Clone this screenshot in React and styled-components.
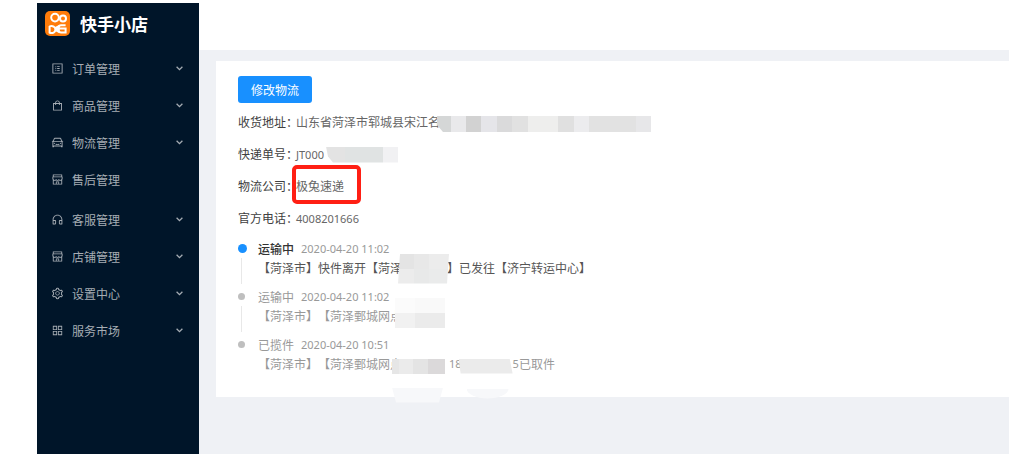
import React from 'react';
import styled, { createGlobalStyle } from 'styled-components';
import {
  AiOutlineProfile,
  AiOutlineShopping,
  AiOutlineCar,
  AiOutlineShop,
  AiOutlineCustomerService,
  AiOutlineSetting,
  AiOutlineAppstore,
} from 'react-icons/ai';

const GlobalStyle = createGlobalStyle`
  * {
    box-sizing: border-box;
  }

  body {
    margin: 0;
    background: #fff;
    color: #666;
    font-family: "Noto Sans CJK SC", sans-serif;
    font-size: 12px;
    text-spacing-trim: space-all;
  }
`;

const Page = styled.div`
  display: flex;
  min-height: 100vh;
  padding: 3px 0 0 37px;
`;

const Sidebar = styled.aside`
  flex: 0 0 162px;
  background: #001529;
`;

const Brand = styled.div`
  display: flex;
  align-items: center;
  gap: 10px;
  height: 40px;
  padding-left: 8px;
  color: #fff;
  font-size: 17px;
  font-weight: 700;
`;

const Menu = styled.ul`
  margin: 0;
  padding: 7px 0 0;
  list-style: none;
`;

const MenuItem = styled.li`
  margin-bottom: ${(props) => (props.$leaf ? '3px' : '0')};
`;

const MenuButton = styled.button`
  display: flex;
  align-items: center;
  width: 100%;
  height: 37px;
  padding: 0 16px 0 14px;
  border: 0;
  background: none;
  color: #a6adb4;
  font: inherit;
  line-height: 18px;
  cursor: pointer;

  svg {
    flex: none;
  }

  span {
    flex: 1;
    margin-left: 8px;
    text-align: left;
  }
`;

const Main = styled.main`
  display: flex;
  flex: 1;
  flex-direction: column;
  min-width: 0;
`;

const Header = styled.header`
  height: 47px;
  background: #fff;
`;

const Content = styled.div`
  flex: 1;
  padding: 11px 0 0 17px;
  background: #eff1f5;
`;

const Card = styled.section`
  padding: 15px 22px 24px;
  background: #fff;
`;

const PrimaryButton = styled.button`
  display: block;
  height: 27px;
  padding: 0 13px;
  border: 0;
  border-radius: 3px;
  background: #1890ff;
  color: #fff;
  font: inherit;
  cursor: pointer;
`;

const InfoList = styled.dl`
  margin: 3px 0 0;
`;

const InfoRow = styled.div`
  display: flex;
  align-items: center;
  height: 32px;
  line-height: 18px;
  white-space: nowrap;
`;

const InfoLabel = styled.dt`
  width: 58px;
  color: #404040;
`;

const InfoValue = styled.dd`
  position: relative;
  margin: 0;
`;

const Latin = styled.span`
  font-family: "Noto Sans", sans-serif;
  font-size: 11px;
`;

const Highlight = styled.span`
  position: absolute;
  top: -12px;
  left: -4px;
  width: 69px;
  height: 39px;
  border: 4px solid #ff1f14;
  border-radius: 5px;
`;

const Timeline = styled.ol`
  margin: 5px 0 0;
  padding: 0;
  list-style: none;
`;

const Step = styled.li`
  position: relative;
  height: 48px;
  padding-left: 20px;
  color: ${(props) => (props.$active ? '#555' : '#999')};
  line-height: 19px;
  white-space: nowrap;

  &::before {
    content: "";
    position: absolute;
    top: ${(props) => (props.$active ? '5px' : '6px')};
    left: 0;
    width: ${(props) => (props.$active ? '9px' : '7px')};
    height: ${(props) => (props.$active ? '9px' : '7px')};
    border-radius: 50%;
    background: ${(props) => (props.$active ? '#1890ff' : '#bfbfbf')};
  }

  &:not(:last-child)::after {
    content: "";
    position: absolute;
    top: 19px;
    left: 3px;
    width: 1px;
    height: 26px;
    background: #e8e8e8;
  }

  &:last-child {
    height: 38px;
  }
`;

const StepHead = styled.div`
  display: flex;
  align-items: center;
  gap: 7px;
  height: 19px;
  color: ${(props) => (props.$active ? '#333' : '#999')};
  font-weight: ${(props) => (props.$active ? '500' : '400')};

  ${Latin} {
    color: #999;
    font-weight: 400;
  }
`;

const StepText = styled.div`
  display: flex;
  align-items: center;
  height: 19px;
`;

// Room left in a line of text for the hidden characters
const Gap = styled.span`
  position: relative;
  flex: 0 0 ${(props) => props.$width}px;
  height: 16px;
`;

const MosaicBox = styled.span`
  position: absolute;
  top: ${(props) => props.$top || 0}px;
  left: ${(props) => props.$left || 0}px;
  clip-path: ${(props) => props.$clip || 'none'};
`;

const MosaicRow = styled.span`
  display: flex;
`;

const MosaicCell = styled.span`
  width: ${(props) => props.$width}px;
  height: ${(props) => props.$height}px;
  background: ${(props) => props.$color};
`;

function Mosaic({ rows, height = 15, top, left, clip }) {
  return (
    <MosaicBox $top={top} $left={left} $clip={clip} aria-hidden="true">
      {rows.map((cells, r) => (
        <MosaicRow key={r}>
          {cells.map(([width, color], i) => (
            <MosaicCell key={i} $width={width} $height={height} $color={color} />
          ))}
        </MosaicRow>
      ))}
    </MosaicBox>
  );
}

function Logo() {
  return (
    <svg width="25" height="25" viewBox="0 0 25 25" fill="none" aria-hidden="true">
      <rect width="25" height="25" rx="5" fill="#ff7c0a" />
      <g stroke="#fff" strokeWidth="2">
        <circle cx="10" cy="6.6" r="3.8" />
        <circle cx="18" cy="7.6" r="3" />
        <path d="M4.6 15v7.2M4.4 15.4c3.4-1 6 .4 6 3.2s-2.6 4-6 3.2" />
        <path d="M20.6 14.2h-4.4c-1.6 0-2.4.8-2.4 2v3.4c0 1.4.8 2 2.4 2h4.4v-4h-6" />
      </g>
      <path d="M10 16l4-2v8l-4-2z" fill="#fff" />
    </svg>
  );
}

function Chevron() {
  return (
    <svg width="7" height="5" viewBox="0 0 7 5" fill="none" stroke="currentColor" strokeWidth="1.3" aria-hidden="true">
      <path d="M.6.8l2.9 2.8L6.4.8" />
    </svg>
  );
}

const menu = [
  { label: '订单管理', icon: AiOutlineProfile },
  { label: '商品管理', icon: AiOutlineShopping },
  { label: '物流管理', icon: AiOutlineCar },
  { label: '售后管理', icon: AiOutlineShop, leaf: true },
  { label: '客服管理', icon: AiOutlineCustomerService },
  { label: '店铺管理', icon: AiOutlineShop },
  { label: '设置中心', icon: AiOutlineSetting },
  { label: '服务市场', icon: AiOutlineAppstore },
];

const addressMosaic = [[
  [14, '#d5d7d7'], [15, '#e9e9eb'], [15, '#d2d2d2'], [16, '#e5e5e9'],
  [15, '#dadadb'], [16, '#e1e1e1'], [30, '#eeeeed'], [16, '#e0e0e0'],
  [15, '#ececee'], [47, '#e2e2e2'], [15, '#e7e7e9'],
]];

const numberMosaic = [[[19, '#e3e3e3'], [38, '#e0e3e3'], [15, '#f1f1f3']]];

const stationMosaic = [
  [[16, '#e4e4e4'], [15, '#e8e8e8'], [20, '#ececec']],
  [[16, '#ececec'], [15, '#e8e9e9'], [20, '#eaebeb']],
];

const branchMosaic = [
  [[20, '#fbfbfb'], [30, '#f9f9f9']],
  [[20, '#f1f1f1'], [30, '#ebebeb']],
];

const courierMosaic = [[[7, '#e6e6e6'], [14, '#ebebeb'], [15, '#e4e4e4'], [17, '#dbd9da']]];

export default function App() {
  return (
    <>
      <GlobalStyle />
      <Page>
        <Sidebar>
          <Brand>
            <Logo />
            快手小店
          </Brand>
          <nav>
            <Menu>
              {menu.map(({ label, icon: Icon, leaf }) => (
                <MenuItem key={label} $leaf={leaf}>
                  <MenuButton type="button">
                    <Icon size={13} />
                    <span>{label}</span>
                    {!leaf && <Chevron />}
                  </MenuButton>
                </MenuItem>
              ))}
            </Menu>
          </nav>
        </Sidebar>
        <Main>
          <Header />
          <Content>
            <Card>
              <PrimaryButton type="button">修改物流</PrimaryButton>
              <InfoList>
                <InfoRow>
                  <InfoLabel>收货地址：</InfoLabel>
                  <InfoValue>
                    山东省菏泽市郓城县宋江名
                    <Mosaic rows={addressMosaic} height={16} top={3} left={141} clip="polygon(0 0, 100% 0, 100% 100%, 6px 100%, 0 9px)" />
                  </InfoValue>
                </InfoRow>
                <InfoRow>
                  <InfoLabel>快递单号：</InfoLabel>
                  <InfoValue>
                    <Latin>JT000</Latin>
                    <Mosaic rows={numberMosaic} height={16} top={2} left={30} clip="polygon(0 0, 100% 0, 100% 100%, 7px 100%, 2px 10px)" />
                  </InfoValue>
                </InfoRow>
                <InfoRow>
                  <InfoLabel>物流公司：</InfoLabel>
                  <InfoValue>
                    极兔速递
                    <Highlight />
                  </InfoValue>
                </InfoRow>
                <InfoRow>
                  <InfoLabel>官方电话：</InfoLabel>
                  <InfoValue>
                    <Latin>4008201666</Latin>
                  </InfoValue>
                </InfoRow>
              </InfoList>
              <Timeline>
                <Step $active>
                  <StepHead $active>
                    运输中 <Latin>2020-04-20 11:02</Latin>
                  </StepHead>
                  <StepText>
                    【菏泽市】快件离开【菏泽
                    <Gap $width={45}>
                      <Mosaic rows={stationMosaic} top={-6} left={-4} clip="polygon(2px 0, 100% 0, 49px 100%, 0 100%)" />
                    </Gap>
                    】已发往【济宁转运中心】
                  </StepText>
                </Step>
                <Step>
                  <StepHead>
                    运输中 <Latin>2020-04-20 11:02</Latin>
                  </StepHead>
                  <StepText>
                    【菏泽市】【菏泽鄄城网点
                    <Gap $width={47}>
                      <Mosaic rows={branchMosaic} top={-10} left={-7} />
                    </Gap>
                  </StepText>
                </Step>
                <Step>
                  <StepHead>
                    已揽件 <Latin>2020-04-20 10:51</Latin>
                  </StepHead>
                  <StepText>
                    【菏泽市】【菏泽鄄城网点
                    <Gap $width={47}>
                      <Mosaic rows={courierMosaic} top={3} left={-10} />
                      <Mosaic rows={[[[51, '#f7f8fa']]]} top={32} left={-10} clip="polygon(0 0, 100% 0, 47px 100%, 4px 100%)" />
                    </Gap>
                    <Latin>18</Latin>
                    <Gap $width={51}>
                      <Mosaic rows={[[[54, '#ebebeb']]]} top={3} left={-3} clip="polygon(0 0, 51px 0, 100% 100%, 2px 100%)" />
                      <Mosaic rows={[[[42, '#f7f8fa']]]} height={10} top={33} left={5} clip="ellipse(50% 100% at 50% 0)" />
                    </Gap>
                    <Latin>5</Latin>已取件
                  </StepText>
                </Step>
              </Timeline>
            </Card>
          </Content>
        </Main>
      </Page>
    </>
  );
}
